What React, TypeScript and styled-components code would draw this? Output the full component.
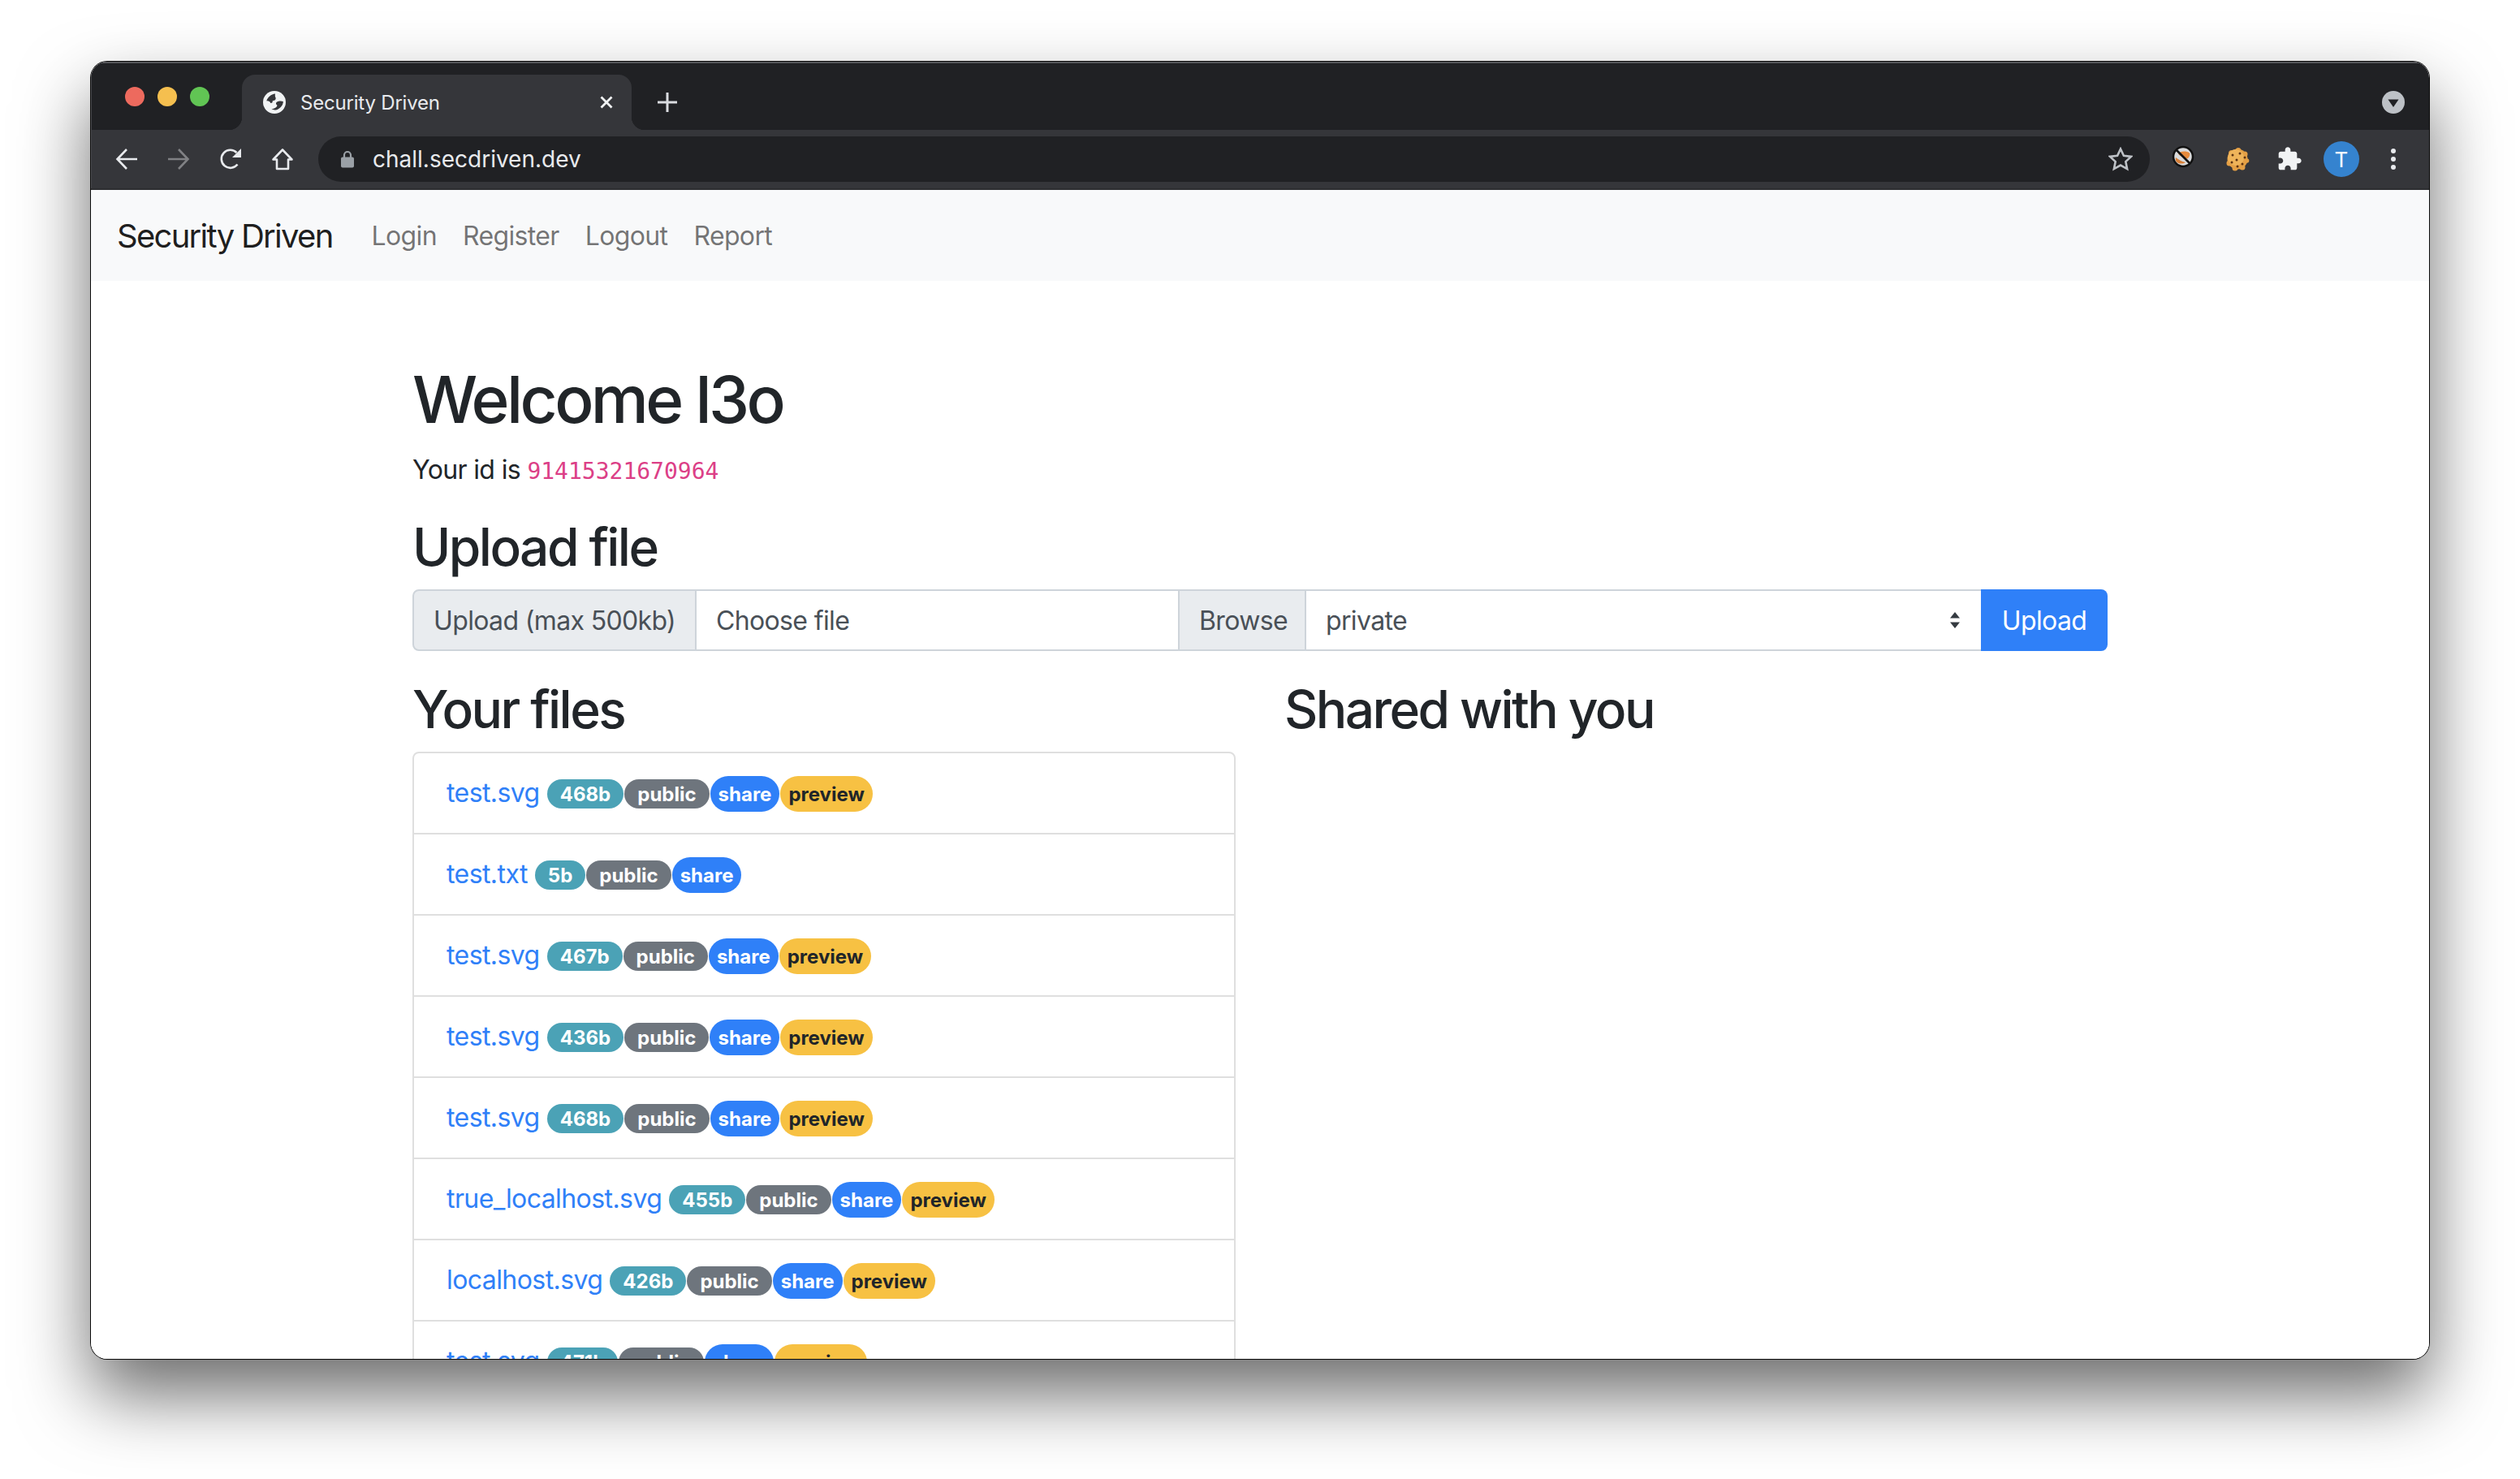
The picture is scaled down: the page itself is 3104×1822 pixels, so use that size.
import React from "react";
import styled, { createGlobalStyle } from "styled-components";

const Global = createGlobalStyle`
  html, body { margin: 0; padding: 0; background: #fff; }
  body { width: 3104px; height: 1822px; overflow: hidden; font-family: Inter, "Liberation Sans", sans-serif; color: #212529; }
  * { box-sizing: border-box; }
`;

const Stage = styled.div`
  padding: 76px 112px 0;
`;

const Win = styled.div`
  width: 2880px;
  height: 1598px;
  border-radius: 20px;
  overflow: hidden;
  background: #fff;
`;

const WinShadow = styled.div`
  border-radius: 20px;
  box-shadow: 0 0 0 1px #0a0a0a, 0 44px 88px rgba(0, 0, 0, 0.58);
`;

const TitleBar = styled.div`
  height: 84px;
  background: #202124;
  display: flex;
  align-items: flex-start;
  padding: 16px 30px 0 42px;
  box-shadow: inset 0 2px 0 #55565a, inset 1px 0 0 #4a4b4f;
`;

const Lights = styled.div`
  display: flex;
  gap: 16px;
  padding-top: 15px;
  margin-right: 40px;
`;

const Light = styled.span<{ $c: string }>`
  width: 24px;
  height: 24px;
  border-radius: 50%;
  background: ${(p) => p.$c};
`;

const Tab = styled.div`
  position: relative;
  width: 480px;
  height: 68px;
  background: #35363a;
  border-radius: 16px 16px 0 0;
  display: flex;
  align-items: center;
  padding: 0 22px 0 26px;
  color: #e8eaed;
  font-size: 24px;
  &::before, &::after {
    content: "";
    position: absolute;
    bottom: 0;
    width: 16px;
    height: 16px;
  }
  &::before { left: -16px; background: radial-gradient(circle at 0 0, transparent 16px, #35363a 16.5px); }
  &::after { right: -16px; background: radial-gradient(circle at 100% 0, transparent 16px, #35363a 16.5px); }
`;

const TabTitle = styled.span`
  margin-left: 18px;
  flex: 1;
  letter-spacing: -0.2px;
`;

const NewTab = styled.div`
  margin-left: 32px;
  height: 68px;
  display: flex;
  align-items: center;
`;

const Spacer = styled.div`
  flex: 1;
`;

const DownBtn = styled.div`
  width: 28px;
  height: 28px;
  margin-top: 20px;
  display: flex;
`;

const Toolbar = styled.div`
  height: 74px;
  background: #35363a;
  border-bottom: 2px solid #2d2e31;
  display: flex;
  align-items: center;
  padding: 0 0 0 30px;
  box-shadow: inset 1px 0 0 #4a4b4f;
`;

const NavIcon = styled.span`
  width: 28px;
  height: 28px;
  margin-right: 36px;
  display: flex;
  flex: none;
  color: #e8eaed;
`;

const Omni = styled.div`
  width: 2256px;
  height: 56px;
  margin-left: -6px;
  flex: none;
  border-radius: 28px;
  background: #202124;
  display: flex;
  align-items: center;
  padding: 0 21px 0 27px;
  color: #e8eaed;
  font-size: 28px;
`;

const OmniUrl = styled.span`
  margin-left: 22px;
  flex: 1;
`;

const Tools = styled.div`
  flex: 1;
  display: flex;
  align-items: center;
  height: 56px;
`;

const ToolSlot = styled.span<{ $w: number; $up?: number }>`
  width: ${(p) => p.$w}px;
  flex: none;
  display: flex;
  justify-content: center;
  align-items: center;
  padding-bottom: ${(p) => p.$up || 0}px;
`;

const Avatar = styled.span`
  width: 44px;
  height: 44px;
  border-radius: 50%;
  background: #3583cf;
  color: #fff;
  font-size: 26px;
  display: flex;
  align-items: center;
  justify-content: center;
`;

const Navbar = styled.nav`
  height: 112px;
  background: #f8f9fa;
  display: flex;
  align-items: center;
  padding: 0 32px;
`;

const Brand = styled.a`
  font-size: 40px;
  letter-spacing: -0.043em;
  color: rgba(0, 0, 0, 0.9);
  margin-right: 32px;
`;

const NavLink = styled.a`
  font-size: 32px;
  letter-spacing: -0.02em;
  padding: 0 16px;
  color: rgba(0, 0, 0, 0.55);
`;

const Content = styled.main`
  width: 2088px;
  margin: 0 auto;
  padding-top: 98px;
`;

const H1 = styled.h1`
  font-size: 80px;
  font-weight: 500;
  line-height: 96px;
  letter-spacing: -0.045em;
  margin: 0 0 15px;
`;

const Para = styled.p`
  font-size: 32px;
  line-height: 48px;
  letter-spacing: -0.02em;
  margin: 0 0 30px;
`;

const Code = styled.code`
  font-family: "DejaVu Sans Mono", monospace;
  font-size: 28px;
  line-height: 1;
  letter-spacing: 0;
  color: #dc3f87;
`;

const H2 = styled.h2`
  font-size: 64px;
  font-weight: 500;
  line-height: 77px;
  letter-spacing: -0.04em;
  padding-top: 2px;
  margin: 0 0 14px;
`;

const InputGroup = styled.div`
  display: flex;
  height: 76px;
  font-size: 32px;
  letter-spacing: -0.02em;
  color: #495057;
  margin-bottom: 31px;
`;

const Addon = styled.span<{ $w: number }>`
  width: ${(p) => p.$w}px;
  flex: none;
  white-space: nowrap;
  border: 2px solid #ced4da;
  background: #e9ecef;
  display: flex;
  align-items: center;
  padding: 0 24px;
  margin-right: -2px;
  &:first-child { border-radius: 8px 0 0 8px; }
`;

const Field = styled.span<{ $w: number }>`
  width: ${(p) => p.$w}px;
  flex: none;
  border: 2px solid #ced4da;
  background: #fff;
  display: flex;
  align-items: center;
  justify-content: space-between;
  padding: 0 24px;
  margin-right: -2px;
`;

const Caret = styled.svg`
  width: 16px;
  height: 20px;
`;

const UploadBtn = styled.button`
  flex: 1;
  border: 0;
  background: #2f80f8;
  color: #fff;
  font: inherit;
  letter-spacing: -0.02em;
  border-radius: 0 8px 8px 0;
  padding: 0;
`;

const Columns = styled.div`
  display: grid;
  grid-template-columns: 1014px 1014px;
  column-gap: 60px;
`;

const List = styled.ul`
  list-style: none;
  margin: 0;
  padding: 0;
  border: 2px solid #dfdfdf;
  border-radius: 8px;
  height: 1000px;
`;

const Row = styled.li`
  height: 100px;
  border-bottom: 2px solid #dfdfdf;
  display: flex;
  align-items: center;
  padding: 2px 40px 0;
  font-size: 32px;
`;

const FileLink = styled.a`
  color: #2f80f8;
  letter-spacing: -0.018em;
  margin-right: 9px;
  margin-top: -3px;
`;

const Badge = styled.span<{ $bg: string; $fg?: string; $tall?: boolean }>`
  height: ${(p) => (p.$tall ? 44 : 36)}px;
  padding: 0 ${(p) => (p.$tall ? 10 : 16)}px;
  margin-right: 1px;
  border-radius: 22px;
  background: ${(p) => p.$bg};
  color: ${(p) => p.$fg || "#fff"};
  font-size: 24px;
  font-weight: 700;
  display: inline-flex;
  align-items: center;
`;

const ArrowLeft = () => (
  <svg width="28" height="28" viewBox="0 0 28 28" fill="none" stroke="#e8eaed" strokeWidth="2.6">
    <path d="M27 14H3M14 2L2.500 14 14 26" />
  </svg>
);

const ArrowRight = () => (
  <svg width="28" height="28" viewBox="0 0 28 28" fill="none" stroke="#808184" strokeWidth="2.6">
    <path d="M1 14H25M14 2L25.500 14 14 26" />
  </svg>
);

const Reload = () => (
  <svg width="28" height="28" viewBox="0 0 28 28" fill="none">
    <path d="M22.500 20.500A11 11 0 1 1 21.500 6" stroke="#e8eaed" strokeWidth="2.6" />
    <path d="M27 1v11H16z" fill="#e8eaed" />
  </svg>
);

const Home = () => (
  <svg width="28" height="28" viewBox="0 0 28 28" fill="none" stroke="#e8eaed" strokeWidth="2.6">
    <path d="M14 2.500L2.500 14.500H7V26H21V14.500H25.500Z" strokeLinejoin="round" />
  </svg>
);

const Lock = () => (
  <svg width="18" height="22" viewBox="0 0 18 22">
    <path d="M5 9V6a4 4 0 0 1 8 0v3" fill="none" stroke="#9aa0a6" strokeWidth="2.200" />
    <rect x="1" y="8.500" width="16" height="13" rx="2" fill="#9aa0a6" />
  </svg>
);

const Star = () => (
  <svg width="30" height="30" viewBox="0 0 30 30" fill="none" stroke="#bdc1c6" strokeWidth="2.600">
    <path d="M15 2.500l3.900 8.300 9.100 1.100-6.700 6.200 1.800 9L15 22.600l-8.100 4.500 1.800-9L2 11.900l9.100-1.100z" />
  </svg>
);

const Globe = () => (
  <svg width="28" height="28" viewBox="0 0 28 28">
    <circle cx="14" cy="14" r="14" fill="#f1f3f4" />
    <path d="M15 3.500C10 3.800 5.500 8 4.300 12.500c2.200-.5 4.200.5 5 2.500 1.800.2 2.700-1 2.500-3 2.800.3 4.300-1.500 3.800-3.800-.8-.6-1-2.900-.6-4.700z" fill="#35363a" />
    <path d="M24.800 13c-2.500-1-6-.6-8 .8-1.500 1.200-1 2.800.5 3.700.3 1.500-.8 2.600-2.500 3.400-1.500.8-3.300 1.500-4.300 1.600 1.500 1 4.500 1.300 7 .4 4-1.500 7.300-5.500 7.300-9.900z" fill="#35363a" />
  </svg>
);

const Close = () => (
  <svg width="18" height="18" viewBox="0 0 18 18" stroke="#f1f3f4" strokeWidth="2.800">
    <path d="M2.500 2.500l13 13M15.500 2.500l-13 13" />
  </svg>
);

const Plus = () => (
  <svg width="24" height="24" viewBox="0 0 24 24" stroke="#dadce0" strokeWidth="3">
    <path d="M12 0v24M0 12h24" />
  </svg>
);

const Down = () => (
  <svg width="28" height="28" viewBox="0 0 28 28">
    <circle cx="14" cy="14" r="14" fill="#bdc1c6" />
    <path d="M7.500 10.500h13L14 20z" fill="#202124" />
  </svg>
);

const Adblock = () => (
  <svg width="28" height="28" viewBox="0 0 28 28">
    <circle cx="14" cy="14" r="12" fill="#d9dadb" stroke="#111" strokeWidth="2.500" />
    <path d="M8 10.500C10 7 18 6.500 22 9.500c1 3-1 6-3 7-4-.5-9-3.500-11-6z" fill="#e58a3c" />
    <path d="M5 15c3 2.500 7 5 12 6-3 2.500-9 2-11.500-1-.8-1.500-1-3.500-.5-5z" fill="#d77f38" />
    <path d="M5.500 5.500l17 17" stroke="#111" strokeWidth="2.600" />
  </svg>
);

const Cookie = () => (
  <svg width="30" height="30" viewBox="0 0 30 30">
    <g fill="#e5a045">
      <circle cx="15" cy="15" r="12.500" />
      <circle cx="8" cy="8" r="4" />
      <circle cx="16" cy="4.500" r="3.500" />
      <circle cx="24" cy="9" r="3.500" />
      <circle cx="26.500" cy="17" r="2.800" />
      <circle cx="21" cy="25" r="3.500" />
      <circle cx="12" cy="26" r="3.500" />
      <circle cx="5" cy="20" r="3.500" />
    </g>
    <circle cx="13" cy="13" r="10" fill="#efb45a" />
    {[[9, 10], [18, 8], [24, 13], [14, 16], [21, 21], [8, 19], [15, 24]].map(([x, y], i) => (
      <circle key={i} cx={x} cy={y} r="1.500" fill="#5e3413" />
    ))}
  </svg>
);

const Puzzle = () => (
  <svg width="32" height="32" viewBox="0 0 24 24" fill="#f1f3f4">
    <path d="M20.500 11H19V7c0-1.100-.9-2-2-2h-4V3.500C13 2.120 11.880 1 10.500 1S8 2.120 8 3.500V5H4c-1.100 0-1.990.9-1.990 2v3.800H3.500c1.490 0 2.700 1.210 2.700 2.700s-1.210 2.700-2.700 2.700H2V20c0 1.100.9 2 2 2h3.800v-1.500c0-1.490 1.210-2.700 2.700-2.700 1.490 0 2.700 1.210 2.700 2.700V22H17c1.100 0 2-.9 2-2v-4h1.500c1.380 0 2.500-1.120 2.500-2.500S21.880 11 20.500 11z" />
  </svg>
);

const Dots = () => (
  <svg width="8" height="28" viewBox="0 0 8 28" fill="#e8eaed">
    <circle cx="4" cy="4" r="3" />
    <circle cx="4" cy="14" r="3" />
    <circle cx="4" cy="24" r="3" />
  </svg>
);

type FileRow = { name: string; size: string; preview: boolean };

const files: FileRow[] = [
  { name: "test.svg", size: "468b", preview: true },
  { name: "test.txt", size: "5b", preview: false },
  { name: "test.svg", size: "467b", preview: true },
  { name: "test.svg", size: "436b", preview: true },
  { name: "test.svg", size: "468b", preview: true },
  { name: "true_localhost.svg", size: "455b", preview: true },
  { name: "localhost.svg", size: "426b", preview: true },
  { name: "test.svg", size: "471b", preview: true },
];

export default function App() {
  return (
    <>
      <Global />
      <Stage>
        <WinShadow>
          <Win>
            <TitleBar>
              <Lights>
                <Light $c="#ed6a5e" />
                <Light $c="#f5bf4f" />
                <Light $c="#61c554" />
              </Lights>
              <Tab>
                <Globe />
                <TabTitle>Security Driven</TabTitle>
                <Close />
              </Tab>
              <NewTab>
                <Plus />
              </NewTab>
              <Spacer />
              <DownBtn>
                <Down />
              </DownBtn>
            </TitleBar>
            <Toolbar>
              <NavIcon><ArrowLeft /></NavIcon>
              <NavIcon><ArrowRight /></NavIcon>
              <NavIcon><Reload /></NavIcon>
              <NavIcon><Home /></NavIcon>
              <Omni>
                <Lock />
                <OmniUrl>chall.secdriven.dev</OmniUrl>
                <Star />
              </Omni>
              <Tools>
                <ToolSlot $w={82} $up={6}><Adblock /></ToolSlot>
                <ToolSlot $w={52}><Cookie /></ToolSlot>
                <ToolSlot $w={76}><Puzzle /></ToolSlot>
                <ToolSlot $w={52}><Avatar>T</Avatar></ToolSlot>
                <ToolSlot $w={76}><Dots /></ToolSlot>
              </Tools>
            </Toolbar>
            <Navbar>
              <Brand>Security Driven</Brand>
              <NavLink>Login</NavLink>
              <NavLink>Register</NavLink>
              <NavLink>Logout</NavLink>
              <NavLink>Report</NavLink>
            </Navbar>
            <Content>
              <H1>Welcome l3o</H1>
              <Para>
                Your id is <Code>91415321670964</Code>
              </Para>
              <H2>Upload file</H2>
              <InputGroup>
                <Addon $w={350}>Upload (max 500kb)</Addon>
                <Field $w={597}>Choose file</Field>
                <Addon $w={158}>Browse</Addon>
                <Field $w={835}>
                  private
                  <Caret viewBox="0 0 16 20">
                    <path d="M8 0l6 7.500H2zM8 20l-6-7.500h12z" fill="#343a40" />
                  </Caret>
                </Field>
                <UploadBtn>Upload</UploadBtn>
              </InputGroup>
              <Columns>
                <section>
                  <H2>Your files</H2>
                  <List>
                    {files.map((f, i) => (
                      <Row key={i}>
                        <FileLink>{f.name}</FileLink>
                        <Badge $bg="#4ba2b6">{f.size}</Badge>
                        <Badge $bg="#6e757d">public</Badge>
                        <Badge $bg="#2f80f8" $tall>share</Badge>
                        {f.preview && <Badge $bg="#f7c143" $fg="#212529" $tall>preview</Badge>}
                      </Row>
                    ))}
                  </List>
                </section>
                <section>
                  <H2>Shared with you</H2>
                </section>
              </Columns>
            </Content>
          </Win>
        </WinShadow>
      </Stage>
    </>
  );
}
